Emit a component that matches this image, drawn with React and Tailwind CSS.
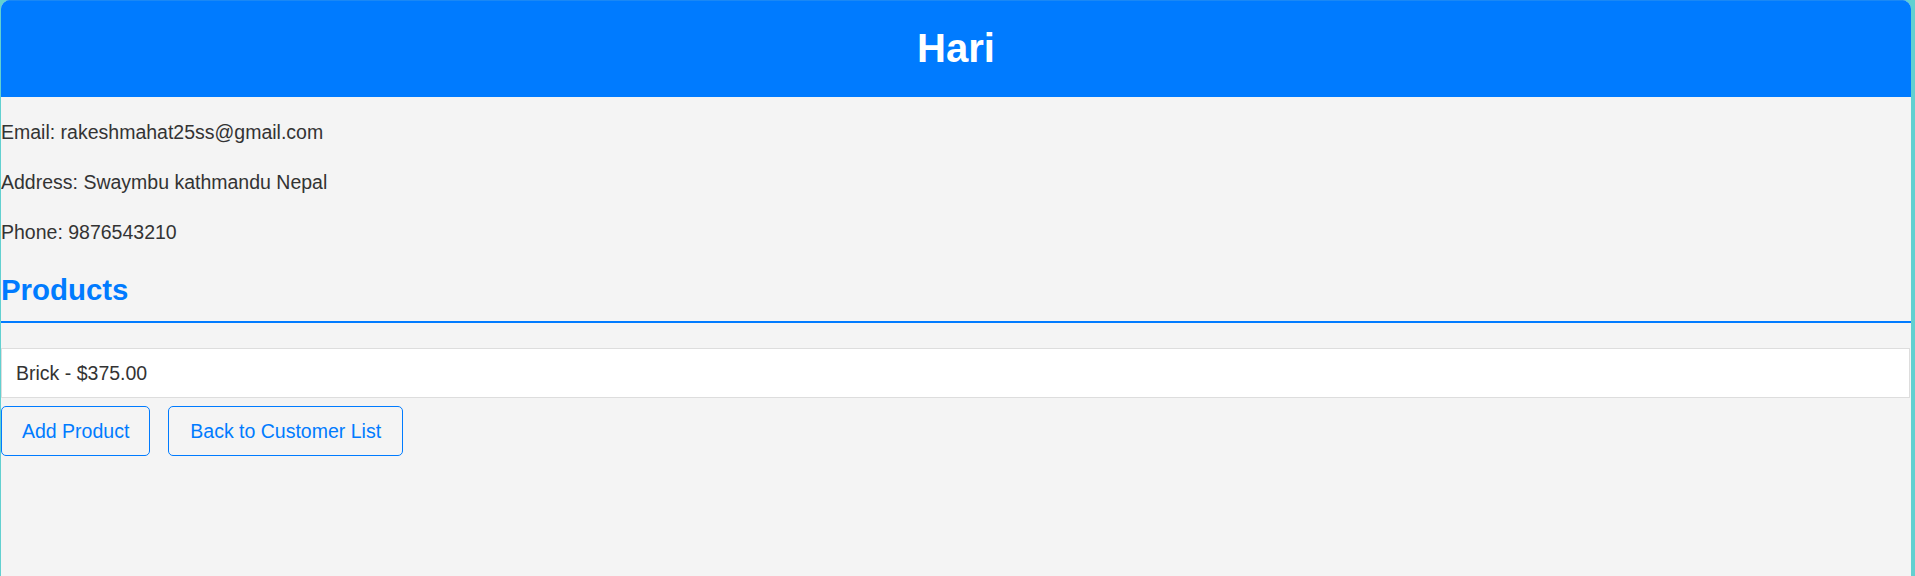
export default function App() {
  const customer = {
    name: 'Hari',
    email: 'rakeshmahat25ss@gmail.com',
    address: 'Swaymbu kathmandu Nepal',
    phone: '9876543210',
  };
  const products = [{ name: 'Brick', price: 375 }];

  return (
    <div className="min-h-[576px] bg-[#62d0d0] pl-[1px] pr-[4px] font-['Liberation_Sans',Arial,sans-serif] text-[#333]">
      <div className="min-h-[576px] bg-[#f4f4f4] rounded-t-[9px] overflow-hidden">
        {/* Header */}
        <div className="h-[97px] pb-[2px] bg-[#007bff] border-t border-[#1a88f5] flex items-center justify-center">
          <h1 className="text-[40px] font-bold text-white leading-none">{customer.name}</h1>
        </div>

        {/* Infos */}
        <div className="mt-[20px] flex flex-col gap-[19.2px] text-[19.5px] leading-[30.7px]">
          <p>Email: {customer.email}</p>
          <p>Address: {customer.address}</p>
          <p>Phone: {customer.phone}</p>
        </div>

        {/* Produits */}
        <h2 className="mt-[26px] pb-[14px] border-b-2 border-[#007bff] text-[29.4px] leading-[34px] font-bold text-[#007bff]">
          Products
        </h2>

        <ul className="mt-[25px] pr-[1px]">
          {products.map((p) => (
            <li
              key={p.name}
              className="h-[50px] flex items-center pl-[14px] bg-white border border-[#dddddd] text-[19.5px]"
            >
              {p.name} - ${p.price.toFixed(2)}
            </li>
          ))}
        </ul>

        <div className="mt-[8px] flex gap-[18px]">
          <button className="h-[50px] px-[20px] border border-[#007bff] rounded-[5px] text-[19.5px] text-[#007bff]">
            Add Product
          </button>
          <button className="h-[50px] px-[21px] border border-[#007bff] rounded-[5px] text-[19.5px] text-[#007bff]">
            Back to Customer List
          </button>
        </div>
      </div>
    </div>
  );
}
